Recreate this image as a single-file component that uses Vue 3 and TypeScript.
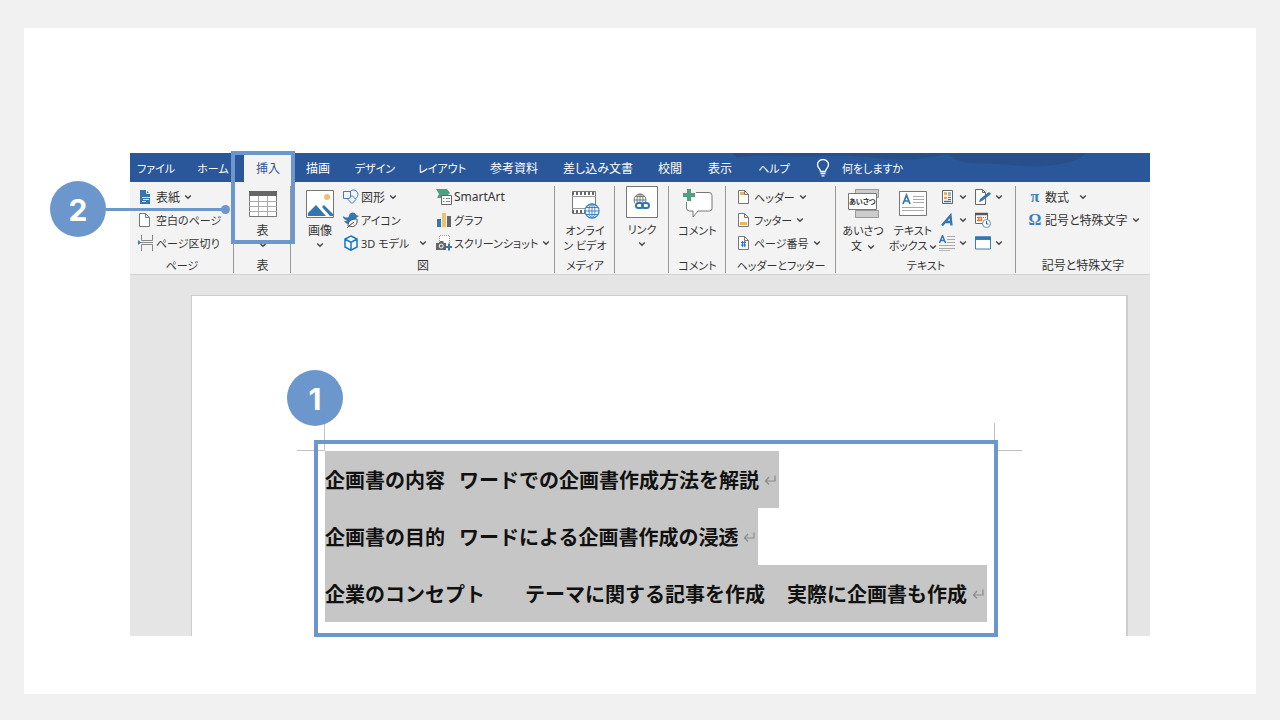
<script setup lang="ts">
interface Tab { id: string; label: string; active?: boolean }
interface Item { icon: string; label: string; menu?: boolean; wide?: boolean }
interface Line { parts: string[]; tail: string }

const tabs: Tab[] = [
  { id: 'file', label: 'ファイル' },
  { id: 'home', label: 'ホーム' },
  { id: 'insert', label: '挿入', active: true },
  { id: 'draw', label: '描画' },
  { id: 'design', label: 'デザイン' },
  { id: 'layout', label: 'レイアウト' },
  { id: 'refs', label: '参考資料' },
  { id: 'mail', label: '差し込み文書' },
  { id: 'review', label: '校閲' },
  { id: 'view', label: '表示' },
  { id: 'help', label: 'ヘルプ' },
]
const pages: Item[] = [
  { icon: 'cover', label: '表紙', menu: true },
  { icon: 'blank', label: '空白のページ' },
  { icon: 'break', label: 'ページ区切り' },
]
const shapes: Item[] = [
  { icon: 'shapes', label: '図形', menu: true },
  { icon: 'icons', label: 'アイコン' },
  { icon: 'cube', label: '3D モデル', menu: true, wide: true },
]
const charts: Item[] = [
  { icon: 'smartart', label: 'SmartArt' },
  { icon: 'chart', label: 'グラフ' },
  { icon: 'camera', label: 'スクリーンショット', menu: true },
]
const headers: Item[] = [
  { icon: 'header', label: 'ヘッダー', menu: true },
  { icon: 'footer', label: 'フッター', menu: true },
  { icon: 'number', label: 'ページ番号', menu: true },
]
const tools: Item[] = [
  { icon: 'parts', label: 'クイック パーツ', menu: true },
  { icon: 'sign', label: '署名欄', menu: true },
  { icon: 'wordart', label: 'ワードアート', menu: true },
  { icon: 'date', label: '日付と時刻' },
  { icon: 'dropcap', label: 'ドロップ キャップ', menu: true },
  { icon: 'object', label: 'オブジェクト', menu: true },
]
const symbols: Item[] = [
  { icon: 'pi', label: '数式', menu: true, wide: true },
  { icon: 'omega', label: '記号と特殊文字', menu: true },
]
const lines: Line[] = [
  { parts: ['企画書の内容', 'ワードでの企画書作成方法を解説'], tail: 'short' },
  { parts: ['企画書の目的', 'ワードによる企画書作成の浸透'], tail: 'short' },
  { parts: ['企業のコンセプト', 'テーマに関する記事を作成', '実際に企画書も作成'], tail: 'long' },
]

// Katakana labels are set one size smaller than kanji ones.
const isKana = (label: string): boolean => /[ァ-ヶー]{2,}/.test(label)
</script>

<template>
  <svg class="defs" aria-hidden="true">
    <symbol id="chev" viewBox="0 0 8 6"><path d="M1.2 1.5 4 4.2 6.8 1.5" fill="none" stroke="#444" stroke-width="1.4" /></symbol>
    <symbol id="cover" viewBox="0 0 16 16"><path d="M2 1h6l4 4v10H2z" fill="#3576b0" /><path d="M8.500 .5v4h4" fill="none" stroke="#f3f3f3" /><path d="M4 8.500h8M5 10.500h6M4 12.500h4" stroke="#dbe9f5" /></symbol>
    <symbol id="blank" viewBox="0 0 16 16"><path d="M1.500 1.500h6l4 4v9h-10zM7.500 1.500v4h4" fill="#fff" stroke="#777" /></symbol>
    <symbol id="break" viewBox="0 0 16 16"><path d="M3.500 0v5.500h11V0M3.500 16V9.500h11V16M2 7.500h13" fill="none" stroke="#888" /><path d="M0 5l3 2.500L0 10z" fill="#3576b0" /></symbol>
    <symbol id="shapes" viewBox="0 0 16 16"><circle cx="10.500" cy="5.500" r="4.500" fill="#f3f3f3" stroke="#3c7dbb" /><path d="M.5 2.500h7v7h-7z" fill="#f3f3f3" stroke="#3c7dbb" /><path d="m9 6.500 4 4-4 4-4-4z" fill="#f3f3f3" stroke="#3c7dbb" /></symbol>
    <symbol id="icons" viewBox="0 0 16 16"><path d="M0 4c3 2 5 2 6 0 0-4 6-5 7-1l3 1-3 2c0 7-8 9-12 3 2 0 2 0 3-1C1 8 0 6 0 4z" fill="#3576b0" /><path d="M5 14c0-5 3-7 9-7 1 6-3 9-8 7l5-4" fill="#f3f3f3" stroke="#555" /><path d="M4 16l3-3" stroke="#555" /></symbol>
    <symbol id="cube" viewBox="0 0 16 16"><path d="m8 1 6 3v8l-6 3.200L2 12V4zM2 4l6 3.500L14 4M8 7.500V15" fill="#fff" stroke="#1478c8" stroke-width="1.500" /></symbol>
    <symbol id="smartart" viewBox="0 0 16 16"><path d="M0 0h11l3 4-2 2H6v3H1l2-4z" fill="#4f9f83" /><path d="M5.500 6.500h10v9h-10z" fill="#fff" stroke="#666" /><path d="M7 9.500h1.500M10 9.500h4M7 12.500h1.500M10 12.500h4" stroke="#888" /></symbol>
    <symbol id="chart" viewBox="0 0 16 16"><path d="M1 7h4v8H1z" fill="#3576b0" /><path d="M6 1h4v14H6z" fill="#efbf74" /><path d="M11 4h4v11h-4z" fill="#666" /></symbol>
    <symbol id="camera" viewBox="0 0 16 16"><path d="M3.500 8V.5h10V9" fill="#fff" stroke="#999" stroke-dasharray="1 1" /><path d="M0 8h3l1-2h3l1 2h2v7H0z" fill="#666" /><circle cx="5.200" cy="11" r="2" fill="#666" stroke="#fff" /><path d="M13 8.500v7M9.500 12h7" stroke="#3576b0" stroke-width="2" /></symbol>
    <symbol id="header" viewBox="0 0 16 16"><path d="M2.500 1.500h6l4 4v9h-10zM8.500 1.500v4h4" fill="#fff" stroke="#777" /><path d="M4 3h4v3H4z" fill="#efb45b" /></symbol>
    <symbol id="footer" viewBox="0 0 16 16"><path d="M2.500 1.500h6l4 4v9h-10zM8.500 1.500v4h4" fill="#fff" stroke="#777" /><path d="M4 10h7v3H4z" fill="#efb45b" /></symbol>
    <symbol id="number" viewBox="0 0 16 16"><path d="M2.500 1.500h6l4 4v9h-10zM8.500 1.500v4h4" fill="#fff" stroke="#777" /><path d="M5 7.500h5M5 10h5M6.500 6v6M8.700 6v6" stroke="#2f78b8" stroke-width="1.200" /></symbol>
    <symbol id="parts" viewBox="0 0 16 16"><path d="M3.500 1.500h10v13h-10z" fill="#fff" stroke="#666" /><path d="M5 4.500h3M5 9h3" stroke="#efa14b" stroke-width="2.500" /><path d="M9 4h3M9 6h3M9 8.500h3M9 10.500h3" stroke="#3576b0" /><path d="M5 12.500h7" stroke="#3576b0" stroke-width="1.500" /></symbol>
    <symbol id="sign" viewBox="0 0 16 16"><path d="M.5.5h7l3 3v12H.5zM7.500.5v3h3" fill="#fff" stroke="#666" /><path d="m4 13 1-3 9-7 2 2-9 7z" fill="#3576b0" /></symbol>
    <symbol id="wordart" viewBox="0 0 16 16"><path d="M3 13.500 11.500 3.500l1 10M6 10h6.500" fill="none" stroke="#3576b0" stroke-width="2.300" /></symbol>
    <symbol id="date" viewBox="0 0 16 16"><path d="M.5 1.500h12v10H.5z" fill="#fff" stroke="#666" /><path d="M0 2h13" stroke="#555" stroke-width="2.500" /><path d="M2 5.500h9M2 8.500h4" stroke="#777" stroke-dasharray="1 1" /><path d="M3.500 5.500h3v3h-3z" fill="#fff" stroke="#e27a35" stroke-width="1.500" /><circle cx="11.500" cy="11.500" r="4" fill="#fff" stroke="#4f94cd" /><path d="M11.500 9v3h2" fill="none" stroke="#555" /></symbol>
    <symbol id="dropcap" viewBox="0 0 16 16"><path d="m.5 8 3-7.500 3 7.500M1.500 5.500h4" fill="none" stroke="#3576b0" stroke-width="1.500" /><path d="M8 1.500h8M8 4.500h8M8 7.500h8M0 10.500h16M0 13.500h16M0 15.700h11" stroke="#aaa" /></symbol>
    <symbol id="object" viewBox="0 0 16 16"><path d="M.5 2h15v12H.5z" fill="#fff" stroke="#3c7dbb" /><path d="M0 3.200h16" stroke="#3576b0" stroke-width="3.500" /></symbol>
    <symbol id="return" viewBox="0 0 12 12"><path d="M11 1.500V7H1.500M5 3 1.500 7 5 10.500" fill="none" stroke="#8a8a8a" stroke-width="1.200" /></symbol>
  </svg>

  <main class="stage">
    <div class="card">
      <div class="app">
        <nav class="tabs" aria-label="リボン">
          <svg class="swirl" viewBox="0 0 420 29" preserveAspectRatio="none" aria-hidden="true">
            <path d="M5 5C30 0 70 5 100 3s60 6 86 3 30-6 40-6H0z" fill="#284f8b" />
            <path d="M215 0h140c-6 10-40 16-75 12-30-3-50 2-65-12z" fill="#284f8b" />
          </svg>
          <button v-for="t in tabs" :key="t.id" type="button" class="tab" :class="{ active: t.active, kana: isKana(t.label) }">{{ t.label }}</button>
          <button type="button" class="tell kana">
            <svg width="14" height="18" viewBox="0 0 14 18" fill="none" stroke="#fff" stroke-width="1.300" aria-hidden="true"><path d="M4.500 12.500c0-3-3-3.500-3-7a5.500 5 0 0 1 11 0c0 3.500-3 4-3 7zM4.500 14.500h5M5.500 16.800h3" /></svg>
            何をしますか
          </button>
        </nav>

        <div class="ribbon">
          <section class="group">
            <div class="body stack pages">
              <button v-for="i in pages" :key="i.icon" type="button" class="row">
                <svg class="ico"><use :href="'#' + i.icon" /></svg><span :class="{ kana: isKana(i.label) }">{{ i.label }}</span>
                <svg v-if="i.menu" class="chev"><use href="#chev" /></svg>
              </button>
            </div>
            <h2 class="kana">ページ</h2>
          </section>

          <section class="group">
            <div class="body">
              <button type="button" class="big">
                <svg class="pic" viewBox="0 0 30 30" aria-hidden="true"><path d="M1.500 2.500h27v25h-27z" fill="#fff" stroke="#777" /><path d="M1 4.500h28" stroke="#666" stroke-width="5" /><path d="M1 12.500h28M1 17.500h28M1 22.500h28M10.500 7v20M19.500 7v20" stroke="#aaa" /></svg>
                <span>表</span>
                <svg class="chev"><use href="#chev" /></svg>
              </button>
            </div>
            <h2>表</h2>
            <div class="frame"></div>
            <div class="callout"><span class="badge">2</span><i class="wire"></i><i class="dot"></i></div>
          </section>

          <section class="group">
            <div class="body illust">
              <button type="button" class="big">
                <svg class="pic" viewBox="0 0 30 30" aria-hidden="true"><path d="M1.500 1.500h27v27h-27z" fill="#fff" stroke="#777" /><circle cx="22" cy="8" r="3" fill="#efbf74" /><path d="M3 27v-3l8-8 10 11zM17 18l2-2 9 9v2h-3z" fill="#3576b0" /></svg>
                <span>画像</span>
                <svg class="chev"><use href="#chev" /></svg>
              </button>
              <div class="stack">
                <button v-for="i in shapes" :key="i.icon" type="button" class="row">
                  <svg class="ico"><use :href="'#' + i.icon" /></svg><span :class="{ kana: isKana(i.label) }">{{ i.label }}</span>
                  <svg v-if="i.menu" class="chev" :class="{ wide: i.wide }"><use href="#chev" /></svg>
                </button>
              </div>
              <div class="stack">
                <button v-for="i in charts" :key="i.icon" type="button" class="row">
                  <svg class="ico"><use :href="'#' + i.icon" /></svg><span :class="{ kana: isKana(i.label) }">{{ i.label }}</span>
                  <svg v-if="i.menu" class="chev"><use href="#chev" /></svg>
                </button>
              </div>
            </div>
            <h2>図</h2>
          </section>

          <section class="group">
            <div class="body">
              <button type="button" class="big kana">
                <svg class="pic" viewBox="0 0 30 30" aria-hidden="true"><path d="M2.500 2.500h23v22h-23z" fill="#fff" stroke="#777" /><path d="M2 4.500h24M2 22.500h14" stroke="#666" stroke-width="3" stroke-dasharray="2 2" /><path d="M2 7.500h24M2 19.500h14" stroke="#999" /><circle cx="22" cy="22" r="7" fill="#fff" stroke="#3c86c6" stroke-width="1.300" /><ellipse cx="22" cy="22" rx="3" ry="7" fill="none" stroke="#3c86c6" /><path d="M15 22h14M16 18.500h12M16 25.500h12M22 15v14" stroke="#3c86c6" fill="none" /></svg>
                <span>オンライ<br />ン ビデオ</span>
              </button>
            </div>
            <h2 class="kana">メディア</h2>
          </section>

          <section class="group">
            <div class="body">
              <button type="button" class="big link kana">
                <svg class="pic" viewBox="0 0 32 32" aria-hidden="true"><path d="M.5.5h31v31H.5z" fill="#fff" stroke="#777" /><circle cx="14" cy="14" r="6" fill="none" stroke="#777" /><path d="M8 14h12M9 10.500h10M14 8v12" stroke="#777" /><ellipse cx="14" cy="14" rx="3" ry="6" fill="none" stroke="#777" /><path d="M9 16h15v8H9z" fill="#fff" /><rect x="10" y="17" width="7" height="5" rx="2.500" fill="none" stroke="#2f73b3" stroke-width="2" /><rect x="16" y="17" width="7" height="5" rx="2.500" fill="none" stroke="#2f73b3" stroke-width="2" /></svg>
                <span>リンク</span>
                <svg class="chev"><use href="#chev" /></svg>
              </button>
            </div>
          </section>

          <section class="group">
            <div class="body">
              <button type="button" class="big kana">
                <svg class="pic" viewBox="0 0 30 30" aria-hidden="true"><path d="M3.500 6q0-2.500 2.500-2.500h20q3 0 3 3v13q0 2.500-2.500 2.500H15l-5 6v-6H6.500q-3 0-3-3z" fill="#fff" stroke="#777" /><path d="M-1 6H13M6-.5v13.500" stroke="#f3f3f3" stroke-width="6" /><path d="M0 6h12M6 0v12" stroke="#4f9f83" stroke-width="4" /></svg>
                <span>コメント</span>
              </button>
            </div>
            <h2 class="kana">コメント</h2>
          </section>

          <section class="group">
            <div class="body stack heads">
              <button v-for="i in headers" :key="i.icon" type="button" class="row">
                <svg class="ico"><use :href="'#' + i.icon" /></svg><span :class="{ kana: isKana(i.label) }">{{ i.label }}</span>
                <svg v-if="i.menu" class="chev"><use href="#chev" /></svg>
              </button>
            </div>
            <h2 class="kana">ヘッダーとフッター</h2>
          </section>

          <section class="group">
            <div class="body texts">
              <button type="button" class="big kana">
                <svg class="pic greet" viewBox="0 0 32 30" aria-hidden="true"><path d="M8.500.5h23v8h-23zM8.500 21.500h23v7h-23z" fill="#ccc" stroke="#999" /><path d="M1.500 4.500h28v16h-28z" fill="#fff" stroke="#777" /><text x="2" y="15">あいさつ</text></svg>
                <span>あいさつ<br />文 <svg class="chev"><use href="#chev" /></svg></span>
              </button>
              <button type="button" class="big kana">
                <svg class="pic" viewBox="0 0 30 30" aria-hidden="true"><path d="M1.500 2.500h27v24h-27z" fill="#fff" stroke="#777" /><path d="m5 15 3.500-9L12 15M6.500 12h4" fill="none" stroke="#3576b0" stroke-width="1.700" /><path d="M15 7.500h11M15 10.500h11M15 13.500h11M4 18.500h22M4 21.500h22" stroke="#aaa" /></svg>
                <span>テキスト<br />ボックス<svg class="chev"><use href="#chev" /></svg></span>
              </button>
              <div class="tools">
                <button v-for="i in tools" :key="i.icon" type="button" class="row" :aria-label="i.label">
                  <svg class="ico"><use :href="'#' + i.icon" /></svg>
                  <svg v-if="i.menu" class="chev"><use href="#chev" /></svg>
                </button>
              </div>
            </div>
            <h2 class="kana">テキスト</h2>
          </section>

          <section class="group">
            <div class="body stack symbols">
              <button v-for="i in symbols" :key="i.icon" type="button" class="row">
                <b class="sym" aria-hidden="true">{{ i.icon === 'pi' ? 'π' : 'Ω' }}</b><span>{{ i.label }}</span>
                <svg v-if="i.menu" class="chev" :class="{ wide: i.wide }"><use href="#chev" /></svg>
              </button>
            </div>
            <h2>記号と特殊文字</h2>
          </section>
        </div>

        <div class="desk">
          <article class="paper">
            <i class="crop left"></i>
            <i class="crop right"></i>
            <div class="selection">
              <span class="badge first">1</span>
              <p v-for="l in lines" :key="l.parts[0]" :class="l.tail">
                <span v-for="s in l.parts" :key="s">{{ s }}</span>
                <svg class="ret" aria-hidden="true"><use href="#return" /></svg>
              </p>
            </div>
          </article>
        </div>
      </div>
    </div>
  </main>
</template>

<style>
body { background: #f1f1f1; }
</style>

<style scoped>
* { box-sizing: border-box; }
.defs { position: absolute; width: 0; height: 0; }
.stage {
  min-height: 100vh;
  padding: 28px 24px 26px;
  display: flex;
  background: #f1f1f1;
  font-family: "Noto Sans", "Noto Sans CJK JP", sans-serif;
  font-size: 12px;
  color: #333;
}
.card { flex: 1; min-width: 0; background: #fff; padding: 125px 106px 58px; display: flex; }
.app { flex: 1; min-width: 0; display: flex; flex-direction: column; }
button { font: inherit; color: inherit; background: none; border: 0; padding: 0; margin: 0; white-space: nowrap; font-feature-settings: "palt"; }
.kana, .group h2.kana { font-size: 11px; }

.tabs {
  position: relative;
  display: grid;
  grid-template-columns: 52fr 62fr 48fr 52fr 62fr 72fr 72fr 96fr 48fr 52fr 56fr 348fr;
  height: 29px;
  background: #2a579a;
  color: #fff;
}
.swirl { position: absolute; right: 0; top: 0; width: 41%; height: 29px; }
.tab { position: relative; min-width: 0; text-align: center; }
.tab.active { background: #f3f3f3; color: #2a579a; }
.tell { position: relative; display: flex; align-items: center; gap: 12px; padding-left: 14px; }

.ribbon {
  display: grid;
  grid-template-columns: 104fr 57fr 264fr 60fr 54fr 57fr 110fr 180fr 134fr;
  background: #f3f3f3;
  border-bottom: 1px solid #d2d2d2;
  height: 93px;
}
.group { position: relative; min-width: 0; display: flex; flex-direction: column; padding-top: 3px; }
.group::after { content: ""; position: absolute; right: 0; top: 4px; bottom: 3px; width: 1px; background: #999; }
.group:last-child::after { display: none; }
.body { height: 71px; display: flex; justify-content: center; align-items: flex-start; }
.group h2 { margin: 0; font-size: 12px; font-weight: 400; line-height: 20px; text-align: center; font-feature-settings: "palt"; white-space: nowrap; }
.stack { display: flex; flex-direction: column; align-items: flex-start; justify-content: flex-start; }
.row { display: flex; align-items: center; height: 23px; gap: 2px; }
.ico { width: 16px; height: 16px; flex: none; }
.sym { width: 16px; flex: none; text-align: center; font: 700 16px/20px "Liberation Serif", serif; color: #3c7dbb; }
.chev { width: 8px; height: 6px; flex: none; margin-left: 2px; }
.chev.wide { margin-left: 8px; }
.big { display: flex; flex-direction: column; align-items: center; line-height: 15px; padding-top: 4px; }
.big > .chev { margin: 4px 0 0; }
.big span { text-align: center; margin-top: 4px; }
.pic { width: 30px; height: 30px; }
.link { padding-top: 1px; }
.link .pic { width: 32px; height: 32px; }
.pic.greet { width: 32px; }
.greet text { font-size: 7px; font-weight: 700; fill: #333; }
.pages { padding-left: 8px; }
.heads { padding-left: 10px; }
.symbols { padding-left: 11px; }
.illust { display: grid; grid-template-columns: 52fr 93fr 119fr; }
.illust .big { padding-left: 6px; }
.texts { display: grid; grid-template-columns: minmax(0, 54fr) minmax(0, 46fr) minmax(0, 80fr); }
.tools { display: grid; grid-template-columns: 36fr 44fr; }
.tools .row { padding-left: 3px; }

.frame { position: absolute; z-index: 2; left: -3px; right: -4px; top: -31px; height: 93px; border: 4px solid #6c97cc; }
.callout { position: absolute; z-index: 3; right: 100%; margin-right: 4px; top: -1px; width: 180px; display: flex; align-items: center; }
.badge { flex: none; width: 56px; height: 56px; border-radius: 50%; background: #6c97cc; color: #fff; font: 700 30px/58px Inter, sans-serif; text-align: center; }
.wire { flex: 1; height: 3px; background: #6c97cc; }
.dot { width: 9px; height: 9px; border-radius: 50%; background: #6c97cc; margin-left: -4px; }

.desk { flex: 1; display: flex; background: #e5e5e5; padding: 20px 22px 0 61px; }
.paper { position: relative; flex: 1; background: #fff; border: 1px solid #ccc; border-width: 1px 2px 0 1px; padding: 144px 128px 0 122px; }
.selection { position: relative; border: 4px solid #6c97cc; padding: 7px 7px 11px 7px; margin-bottom: -1px; }
.selection p {
  width: fit-content;
  height: 57px;
  margin: 0;
  padding-right: 3px;
  display: flex;
  align-items: center;
  background: #c6c6c6;
  color: #111;
  font-family: "Noto Sans CJK JP", sans-serif;
  font-size: 20px;
  font-weight: 700;
  white-space: nowrap;
}
.short span + span { margin-left: 14px; }
.long span + span { margin-left: 40px; }
.long span + span + span { margin-left: 22px; }
.ret { width: 12px; height: 12px; margin-left: 5px; }
.first { position: absolute; left: -31px; top: -74px; }
.crop { position: absolute; width: 28px; height: 28px; border: 0 solid #c2c2c2; top: 127px; }
.crop.left { left: 105px; border-width: 0 1px 1px 0; }
.crop.right { right: 104px; border-width: 0 0 1px 1px; }
</style>
